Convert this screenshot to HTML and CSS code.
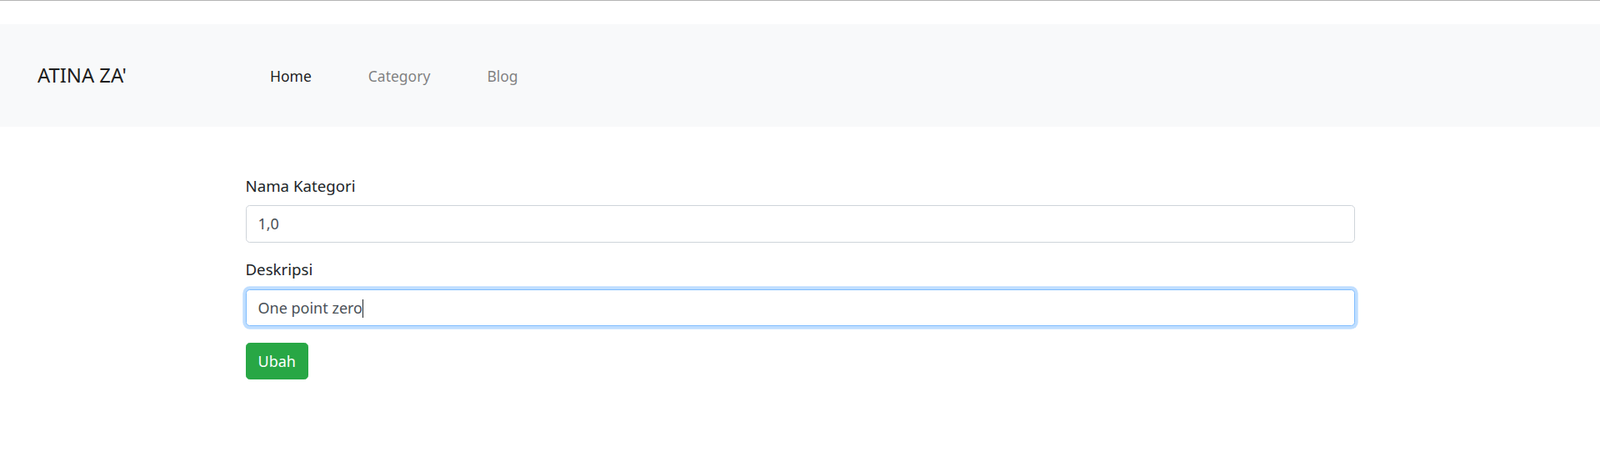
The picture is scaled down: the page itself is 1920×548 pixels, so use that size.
FILE: index.html
```html
<!DOCTYPE html>
<html lang="id">
<head>
<meta charset="utf-8">
<title>Ubah Kategori</title>
<link rel="stylesheet" href="styles.css">
</head>
<body>
<div class="page">
  <nav class="navbar">
    <a class="brand" href="#">ATINA ZA'</a>
    <ul class="nav">
      <li><a class="nav-link active" href="#">Home</a></li>
      <li><a class="nav-link" href="#">Category</a></li>
      <li><a class="nav-link" href="#">Blog</a></li>
    </ul>
  </nav>
  <main class="container">
    <form class="form">
      <div class="form-group">
        <label class="label" for="nama">Nama Kategori</label>
        <input class="input" id="nama" type="text" value="1,0">
      </div>
      <div class="form-group">
        <label class="label" for="desk">Deskripsi</label>
        <div class="input input-focus" id="desk">One point zero<span class="caret"></span></div>
      </div>
      <button class="btn" type="button">Ubah</button>
    </form>
  </main>
</div>
</body>
</html>
```
FILE: styles.css
```css
html, body {
  margin: 0;
  padding: 0;
  background: #fff;
}
body {
  font-family: "Noto Sans", "Open Sans", "Liberation Sans", sans-serif;
  font-size: 18.67px;
  line-height: 1.5;
  color: #212529;
}
.page {
  border-top: 1px solid #b4b4b4;
  padding-top: 28px;
}
.navbar {
  height: 123px;
  background: #f8f9fa;
  display: flex;
  align-items: center;
  padding-left: 45px;
}
.brand {
  font-size: 23.8px;
  color: rgba(0, 0, 0, 0.9);
  text-decoration: none;
  width: 279px;
}
.nav {
  display: flex;
  list-style: none;
  margin: 0;
  padding: 0;
  gap: 68px;
}
.nav-link {
  font-size: 17.5px;
  color: rgba(0, 0, 0, 0.5);
  text-decoration: none;
}
.nav-link.active {
  color: rgba(0, 0, 0, 0.9);
}
.container {
  width: 1331px;
  margin: 57px auto 0;
}
.form-group {
  margin-bottom: 18.67px;
}
.label {
  display: block;
  margin-bottom: 9.33px;
  font-size: 18.67px;
  line-height: 28px;
}
.input {
  box-sizing: border-box;
  display: block;
  width: 100%;
  height: 44.3px;
  padding: 0 14px;
  font-family: inherit;
  font-size: 18px;
  line-height: 42px;
  color: #495057;
  background: #fff;
  border: 1px solid #ced4da;
  border-radius: 4.67px;
  outline: none;
}
.input-focus {
  border-color: #80bdff;
  box-shadow: 0 0 0 3.7px rgba(0, 123, 255, 0.25);
}
.caret {
  display: inline-block;
  width: 1px;
  height: 22px;
  background: #212529;
  vertical-align: -5px;
}
.btn {
  margin-top: 1px;
  height: 44.3px;
  padding: 0 14px;
  font-family: inherit;
  font-size: 18px;
  color: #fff;
  background: #28a745;
  border: 1px solid #28a745;
  border-radius: 4.67px;
  cursor: pointer;
}
```
